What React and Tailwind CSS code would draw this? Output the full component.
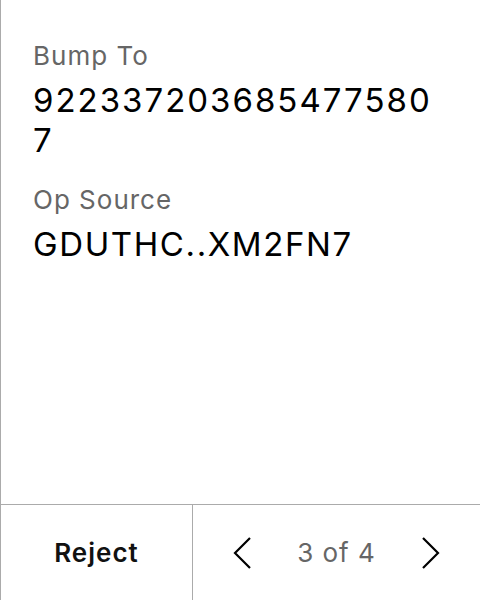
export default function App() {
    return (
        <div className="h-[600px] w-[480px] flex flex-col bg-white border-l border-[#ababab] font-['Inter',sans-serif]">
            <div className="flex-1 px-8 pt-10">
                <div className="flex flex-col gap-2">
                    <p className="text-[26px] leading-8 tracking-[1px] text-[#666666]">Bump To</p>
                    <p className="text-[33px] leading-10 tracking-[2px] text-black break-all">9223372036854775807</p>
                </div>
                <div className="flex flex-col gap-2 mt-6">
                    <p className="text-[26px] leading-8 tracking-[1px] text-[#666666]">Op Source</p>
                    <p className="text-[33px] leading-10 tracking-[1.6px] text-black">GDUTHC..XM2FN7</p>
                </div>
            </div>
            <div className="h-24 flex border-t border-[#ababab]">
                <button className="w-[192px] border-r border-[#ababab] flex items-center justify-center text-[26px] tracking-[1px] font-semibold text-[#111111]">
                    Reject
                </button>
                <div className="flex-1 flex items-center justify-between pl-10 pr-10">
                    <svg width="20" height="32" viewBox="0 0 20 32" fill="none" stroke="#000" strokeWidth="2.2">
                        <polyline points="17,1 2,16 17,31" />
                    </svg>
                    <span className="text-[26px] tracking-[1px] text-[#666666]">3 of 4</span>
                    <svg width="20" height="32" viewBox="0 0 20 32" fill="none" stroke="#000" strokeWidth="2.2">
                        <polyline points="3,1 18,16 3,31" />
                    </svg>
                </div>
            </div>
        </div>
    );
}
